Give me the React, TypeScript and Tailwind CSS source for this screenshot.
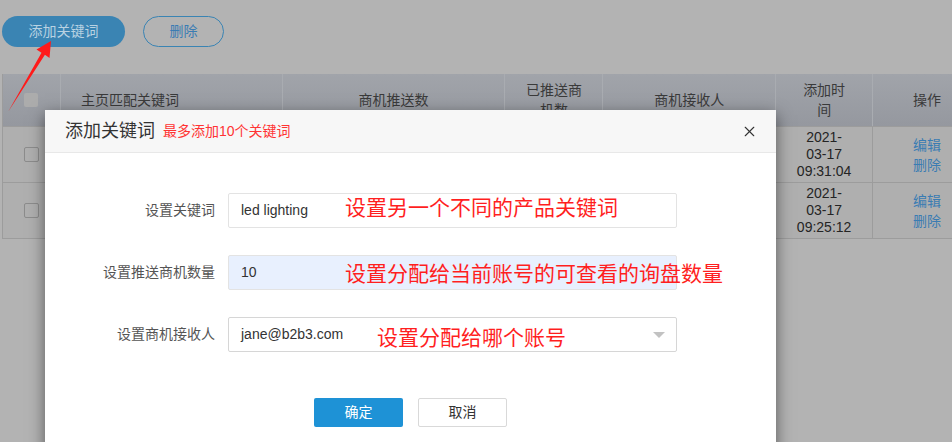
import React from "react";
import { X } from "lucide-react";

const font = { fontFamily: '"Liberation Sans","Noto Sans CJK SC",sans-serif' };

function HeaderCell({ w, children, className = "" }: { w: string; children?: React.ReactNode; className?: string }) {
  return (
    <div className={`${w} h-full flex items-center border-r border-[#a9acb1] text-[14px] leading-[20px] text-[#3a3a3a] ${className}`}>
      {children}
    </div>
  );
}

function Row({ time }: { time: string[] }) {
  return (
    <div className="flex h-[56px] border-t border-[#9c9c9c] bg-[#afafaf]">
      <div className="w-[58px] flex items-center justify-center border-r border-[#9c9c9c]">
        <div className="w-[15px] h-[15px] rounded-[2px] border border-[#8c8c8c]" />
      </div>
      <div className="w-[222px] border-r border-[#9c9c9c]" />
      <div className="w-[223px] border-r border-[#9c9c9c]" />
      <div className="w-[98px] border-r border-[#9c9c9c]" />
      <div className="w-[173px] border-r border-[#9c9c9c]" />
      <div className="w-[97px] flex flex-col items-center justify-center border-r border-[#9c9c9c] text-[14px] leading-[17px] text-[#242424]">
        {time.map((t) => (
          <span key={t}>{t}</span>
        ))}
      </div>
      <div className="w-[79px] flex flex-col items-end justify-center pr-[11px] text-[14px] leading-[20px] text-[#3a7cb3]">
        <span>编辑</span>
        <span>删除</span>
      </div>
    </div>
  );
}

function FormRow({ label, children }: { label: string; children: React.ReactNode }) {
  return (
    <div className="flex items-center">
      <div className="w-[183px] shrink-0 pr-[13px] text-right text-[14px] text-[#555]">{label}</div>
      {children}
    </div>
  );
}

export default function App() {
  return (
    <div className="relative w-[952px] h-[442px] overflow-hidden bg-[#b3b3b3]" style={font}>
      {/* top bar */}
      <div className="h-[74px] flex items-start pt-[16px] pl-[2px] gap-[18px]">
        <div className="w-[123px] h-[31px] rounded-full bg-[#3a84b3] flex items-center justify-center text-[14px] text-[#b8d2e2]">
          添加关键词
        </div>
        <div className="w-[81px] h-[31px] rounded-full border border-[#3a84b3] flex items-center justify-center text-[14px] text-[#3a7cb3]">
          删除
        </div>
      </div>

      {/* table */}
      <div className="ml-[2px] w-[950px] border-l border-b border-[#9c9c9c]">
        <div className="flex h-[52px] bg-gradient-to-b from-[#a1a4aa] to-[#95989f]">
          <HeaderCell w="w-[58px]" className="justify-center">
            <div className="w-[14px] h-[14px] rounded-[2px] bg-[#acacac]" />
          </HeaderCell>
          <HeaderCell w="w-[222px]" className="pl-[20px]">主页匹配关键词</HeaderCell>
          <HeaderCell w="w-[223px]" className="justify-center">商机推送数</HeaderCell>
          <HeaderCell w="w-[98px]" className="justify-center text-center px-[16px]">已推送商机数</HeaderCell>
          <HeaderCell w="w-[173px]" className="justify-center">商机接收人</HeaderCell>
          <HeaderCell w="w-[97px]" className="justify-center text-center px-[22px]">添加时间</HeaderCell>
          <div className="w-[79px] h-full flex items-center justify-end pr-[11px] text-[14px] text-[#3a3a3a]">操作</div>
        </div>
        <Row time={["2021-", "03-17", "09:31:04"]} />
        <Row time={["2021-", "03-17", "09:25:12"]} />
      </div>

      {/* modal */}
      <div className="absolute left-[45px] top-[110px] w-[731px] h-[345px] bg-white shadow-[0_5px_15px_rgba(0,0,0,0.5)]">
        <div className="h-[43px] bg-[#f7f7f7] border-b border-[#e8e8e8] flex items-center pl-[20px] pr-[18px]">
          <span className="text-[18px] text-[#333]">添加关键词</span>
          <span className="ml-[8px] text-[14px] text-[#ff3333] mt-[1px]">最多添加10个关键词</span>
          <X className="ml-auto text-[#333]" size={17} strokeWidth={1.6} />
        </div>
        <div className="pt-[40px] flex flex-col gap-[27px]">
          <FormRow label="设置关键词">
            <div className="relative w-[449px] h-[35px] border border-[#e3e3e3] rounded-[2px] flex items-center pl-[12px] text-[14px] text-[#333]">
              led lighting
              <span className="absolute left-[116px] top-[-1px] whitespace-nowrap text-[21px] leading-[30px] text-[#ff1f1f]">设置另一个不同的产品关键词</span>
            </div>
          </FormRow>
          <FormRow label="设置推送商机数量">
            <div className="relative w-[449px] h-[35px] border border-[#e3e3e3] rounded-[2px] bg-[#e8f0fe] flex items-center pl-[12px] text-[14px] text-[#333]">
              10
              <span className="absolute left-[116px] top-[3px] whitespace-nowrap text-[21px] leading-[30px] text-[#ff1f1f]">设置分配给当前账号的可查看的询盘数量</span>
            </div>
          </FormRow>
          <FormRow label="设置商机接收人">
            <div className="relative w-[449px] h-[35px] border border-[#d6d6d6] rounded-[2px] flex items-center pl-[12px] text-[14px] text-[#333]">
              jane@b2b3.com
              <span className="absolute left-[148px] top-[5px] whitespace-nowrap text-[21px] leading-[30px] text-[#ff1f1f]">设置分配给哪个账号</span>
              <div className="ml-auto mr-[11px] w-0 h-0 border-l-[6px] border-r-[6px] border-t-[6px] border-l-transparent border-r-transparent border-t-[#c2c2c2]" />
            </div>
          </FormRow>
        </div>
        <div className="mt-[46px] flex justify-center gap-[15px]">
          <div className="w-[89px] h-[29px] rounded-[2px] bg-[#1e92d6] flex items-center justify-center text-[14px] text-white">确定</div>
          <div className="w-[89px] h-[29px] rounded-[2px] border border-[#d9d9d9] flex items-center justify-center text-[14px] text-[#333]">取消</div>
        </div>
      </div>

      {/* red arrow annotation */}
      <svg className="absolute left-0 top-0 pointer-events-none" width="80" height="120" viewBox="0 0 80 120">
        <polygon points="8,112 41.5,52.8 36.5,49.5 51,41 49.5,58 44.9,54.8" fill="#ff1a1a" />
      </svg>
    </div>
  );
}
